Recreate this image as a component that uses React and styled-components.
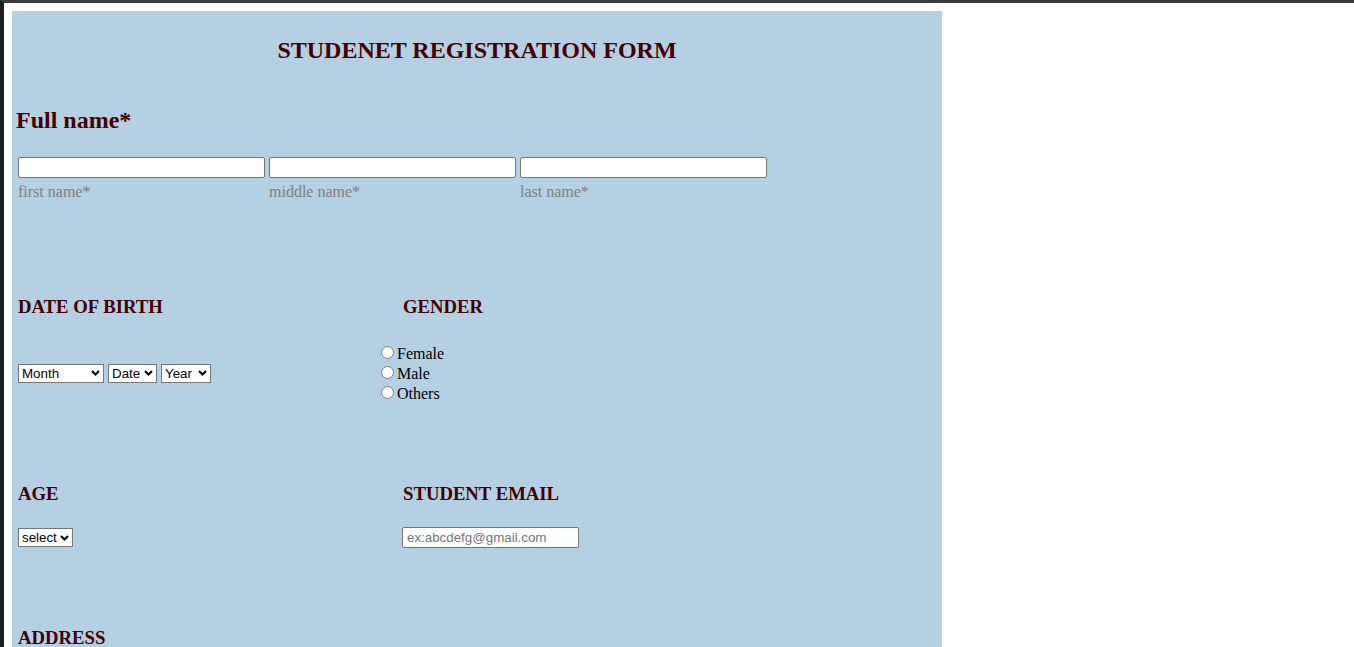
import React from 'react'
import styled, { createGlobalStyle } from 'styled-components'

const MONTHS = ['January', 'February', 'March', 'April', 'May', 'June', 'July', 'August', 'September', 'October', 'November', 'December']
const DATES = Array.from({ length: 31 }, (_, i) => i + 1)
const YEARS = Array.from({ length: 30 }, (_, i) => 1995 + i)
const AGES = Array.from({ length: 16 }, (_, i) => 15 + i)

// small bold chevron used as the select arrow
const CHEVRON = `url("data:image/svg+xml;utf8,<svg xmlns='http://www.w3.org/2000/svg' width='9' height='6' viewBox='0 0 9 6'><path d='M1 1 L4.5 4.5 L8 1' fill='none' stroke='black' stroke-width='2'/></svg>")`

function App() {
    return (
        <>
            <GlobalStyle />
            <Form>
                <Title>STUDENET REGISTRATION FORM</Title>

                <SectionTitle>Full name*</SectionTitle>
                <NameRow>
                    {['first name*', 'middle name*', 'last name*'].map((name) => (
                        <NameField key={name}>
                            <TextBox type="text" />
                            <Hint>{name}</Hint>
                        </NameField>
                    ))}
                </NameRow>

                <HeadRow $top={95}>
                    <Heading>DATE OF BIRTH</Heading>
                    <Heading $right>GENDER</Heading>
                </HeadRow>
                <ControlRow $top={25}>
                    <Selects>
                        <Select $w={86}>
                            <option>Month</option>
                            {MONTHS.map((m) => <option key={m}>{m}</option>)}
                        </Select>
                        <Select $w={49}>
                            <option>Date</option>
                            {DATES.map((d) => <option key={d}>{d}</option>)}
                        </Select>
                        <Select $w={50}>
                            <option>Year</option>
                            {YEARS.map((y) => <option key={y}>{y}</option>)}
                        </Select>
                    </Selects>
                    <RadioGroup>
                        {['Female', 'Male', 'Others'].map((g) => (
                            <RadioLabel key={g}>
                                <input type="radio" name="gender" value={g} />{g}
                            </RadioLabel>
                        ))}
                    </RadioGroup>
                </ControlRow>

                <HeadRow $top={80}>
                    <Heading>AGE</Heading>
                    <Heading $right>STUDENT EMAIL</Heading>
                </HeadRow>
                <ControlRow $top={22}>
                    <Selects>
                        <Select $w={55}>
                            <option>select</option>
                            {AGES.map((a) => <option key={a}>{a}</option>)}
                        </Select>
                    </Selects>
                    <Cell $right>
                        <TextBox type="email" $w={177} placeholder="ex:abcdefg@gmail.com" />
                    </Cell>
                </ControlRow>

                <HeadRow $top={79}>
                    <Heading>ADDRESS</Heading>
                </HeadRow>
                <ControlRow $top={23}>
                    <Cell>
                        <Area rows={5} />
                    </Cell>
                </ControlRow>

                <HeadRow $top={80}>
                    <Heading>PHONE NUMBER</Heading>
                    <Heading $right>COURSE</Heading>
                </HeadRow>
                <ControlRow $top={23}>
                    <Cell>
                        <TextBox type="tel" $w={177} placeholder="+91 0000000000" />
                    </Cell>
                    <Cell $right>
                        <Select $w={120}>
                            <option>select course</option>
                            <option>B.Tech</option>
                            <option>B.Sc</option>
                            <option>B.Com</option>
                            <option>BBA</option>
                        </Select>
                    </Cell>
                </ControlRow>

                <HeadRow $top={80}>
                    <Heading>HOBBIES</Heading>
                </HeadRow>
                <ControlRow $top={23}>
                    <Cell>
                        {['Reading', 'Music', 'Sports', 'Drawing'].map((h) => (
                            <RadioLabel key={h} $inline>
                                <input type="checkbox" />{h}
                            </RadioLabel>
                        ))}
                    </Cell>
                </ControlRow>

                <Actions>
                    <Button type="submit">Submit</Button>
                    <Button type="reset">Reset</Button>
                </Actions>
            </Form>
        </>
    )
}

export default App

const GlobalStyle = createGlobalStyle`
    html {
        border-top: 3px solid #3b3b3b;
        border-left: 4px solid #1f1f1f;
        background: #fff;
    }

    body {
        margin: 8px;
        font-family: "Liberation Serif", "Times New Roman", serif;
        font-size: 16px;
        color: #000;
    }
`

const Form = styled.form`
    width: 930px;
    box-sizing: border-box;
    background: #b5d0e2;
    padding: 0 4px 100px;
    overflow: hidden;
`

const Title = styled.h2`
    margin: 26px 0 0;
    text-align: center;
    font-size: 24px;
    font-weight: bold;
    color: #430000;
`

const SectionTitle = styled.h2`
    margin: 43px 0 0;
    font-size: 24px;
    font-weight: bold;
    color: #430000;
`

const NameRow = styled.div`
    display: flex;
    gap: 4px;
    margin-top: 23px;
    padding-left: 2px;
`

const NameField = styled.div`
    display: flex;
    flex-direction: column;
    width: 247px;
`

const TextBox = styled.input`
    box-sizing: border-box;
    width: ${(p) => (p.$w ? `${p.$w}px` : '247px')};
    height: 21px;
    margin: 0;
    padding: 1px 4px;
    border: 1px solid #767676;
    border-radius: 2px;
    background: #fff;
    font-family: "Liberation Sans", Arial, sans-serif;
    font-size: 13.33px;

    &::placeholder {
        color: #757575;
    }
`

const Hint = styled.span`
    margin-top: 5px;
    color: #808080;
    font-size: 16px;
`

const HeadRow = styled.div`
    display: grid;
    grid-template-columns: 358px 1fr;
    margin-top: ${(p) => p.$top}px;
    padding-left: 2px;
`

const Heading = styled.h3`
    grid-column: ${(p) => (p.$right ? 2 : 1)};
    margin: 0;
    padding-left: ${(p) => (p.$right ? '27px' : '0')};
    font-size: 18.72px;
    font-weight: bold;
    color: #430000;
`

const ControlRow = styled.div`
    display: grid;
    grid-template-columns: 358px 1fr;
    align-items: center;
    margin-top: ${(p) => p.$top}px;
    padding-left: 2px;
`

const Selects = styled.div`
    display: flex;
    gap: 4px;
`

const Select = styled.select`
    appearance: none;
    box-sizing: border-box;
    width: ${(p) => p.$w}px;
    height: 19px;
    margin: 0;
    padding: 0 12px 0 3px;
    border: 1px solid #767676;
    border-radius: 0;
    background: #fff ${CHEVRON} no-repeat right 3px center;
    color: #000;
    font-family: "Liberation Sans", Arial, sans-serif;
    font-size: 13.33px;
    line-height: 17px;
`

const Cell = styled.div`
    grid-column: ${(p) => (p.$right ? 2 : 1)};
    padding-left: ${(p) => (p.$right ? '26px' : '0')};
`

const RadioGroup = styled.div`
    grid-column: 2;
    display: flex;
    flex-direction: column;
`

const RadioLabel = styled.label`
    display: ${(p) => (p.$inline ? 'inline-block' : 'block')};
    margin-right: ${(p) => (p.$inline ? '12px' : '0')};
    font-size: 16px;

    input {
        margin: 3px 3px 0 5px;
    }
`

const Area = styled.textarea`
    width: 420px;
    font-family: "Liberation Mono", monospace;
    font-size: 13.33px;
    border: 1px solid #767676;
    border-radius: 2px;
`

const Actions = styled.div`
    display: flex;
    justify-content: center;
    gap: 12px;
    margin-top: 80px;
`

const Button = styled.button`
    padding: 4px 16px;
    border: 1px solid #767676;
    border-radius: 2px;
    background: #efefef;
    font-family: "Liberation Sans", Arial, sans-serif;
    font-size: 13.33px;
    cursor: pointer;
`
